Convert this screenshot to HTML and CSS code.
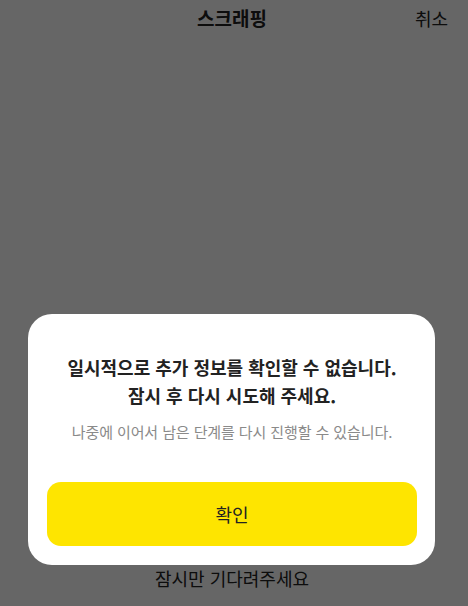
FILE: index.html
```html
<!DOCTYPE html>
<html lang="ko">
<head>
<meta charset="utf-8">
<link rel="stylesheet" href="styles.css">
</head>
<body>
<div class="page">
  <header class="header">
    <div class="title">스크래핑</div>
    <div class="cancel">취소</div>
  </header>
  <main class="content"></main>
  <div class="loading">잠시만 기다려주세요</div>
</div>
<div class="overlay">
  <div class="dialog">
    <div class="dialog-title">일시적으로 추가 정보를 확인할 수 없습니다.<br>잠시 후 다시 시도해 주세요.</div>
    <div class="dialog-desc">나중에 이어서 남은 단계를 다시 진행할 수 있습니다.</div>
    <button class="confirm">확인</button>
  </div>
</div>
</body>
</html>
```
FILE: styles.css
```css
* { box-sizing: border-box; }
html, body { margin: 0; padding: 0; }
body {
  width: 468px;
  height: 606px;
  overflow: hidden;
  background: #ffffff;
  font-family: "Noto Sans CJK KR", "Noto Sans", sans-serif;
  color: #222;
  position: relative;
}
.page {
  height: 606px;
  display: flex;
  flex-direction: column;
}
.header {
  height: 36px;
  position: relative;
  display: flex;
  align-items: center;
  justify-content: center;
}
.title {
  font-size: 19px;
  font-weight: 700;
  line-height: 36px;
  margin-left: -4px;
}
.cancel {
  position: absolute;
  right: 20px;
  top: 0;
  font-size: 18px;
  line-height: 36px;
}
.content { flex: 1; }
.loading {
  text-align: center;
  font-size: 18px;
  line-height: 24px;
  padding-bottom: 16px;
  margin-left: -4px;
}
.overlay {
  position: absolute;
  inset: 0;
  background: rgba(0, 0, 0, 0.6);
}
.dialog {
  position: absolute;
  left: 28px;
  top: 314px;
  width: 407px;
  height: 251px;
  background: #fff;
  border-radius: 24px;
  padding: 39px 18px 19px 19px;
  display: flex;
  flex-direction: column;
  align-items: stretch;
}
.dialog-title {
  text-align: center;
  font-size: 18px;
  font-weight: 700;
  line-height: 28px;
  color: #222;
}
.dialog-desc {
  margin-top: 13px;
  text-align: center;
  font-size: 15px;
  line-height: 20px;
  letter-spacing: -0.1px;
  color: #8a8a8a;
}
.confirm {
  margin-top: auto;
  height: 64px;
  border: none;
  border-radius: 14px;
  background: #fee500;
  font-family: inherit;
  font-size: 18px;
  line-height: 62px;
  color: #222;
  padding: 0;
}
```
